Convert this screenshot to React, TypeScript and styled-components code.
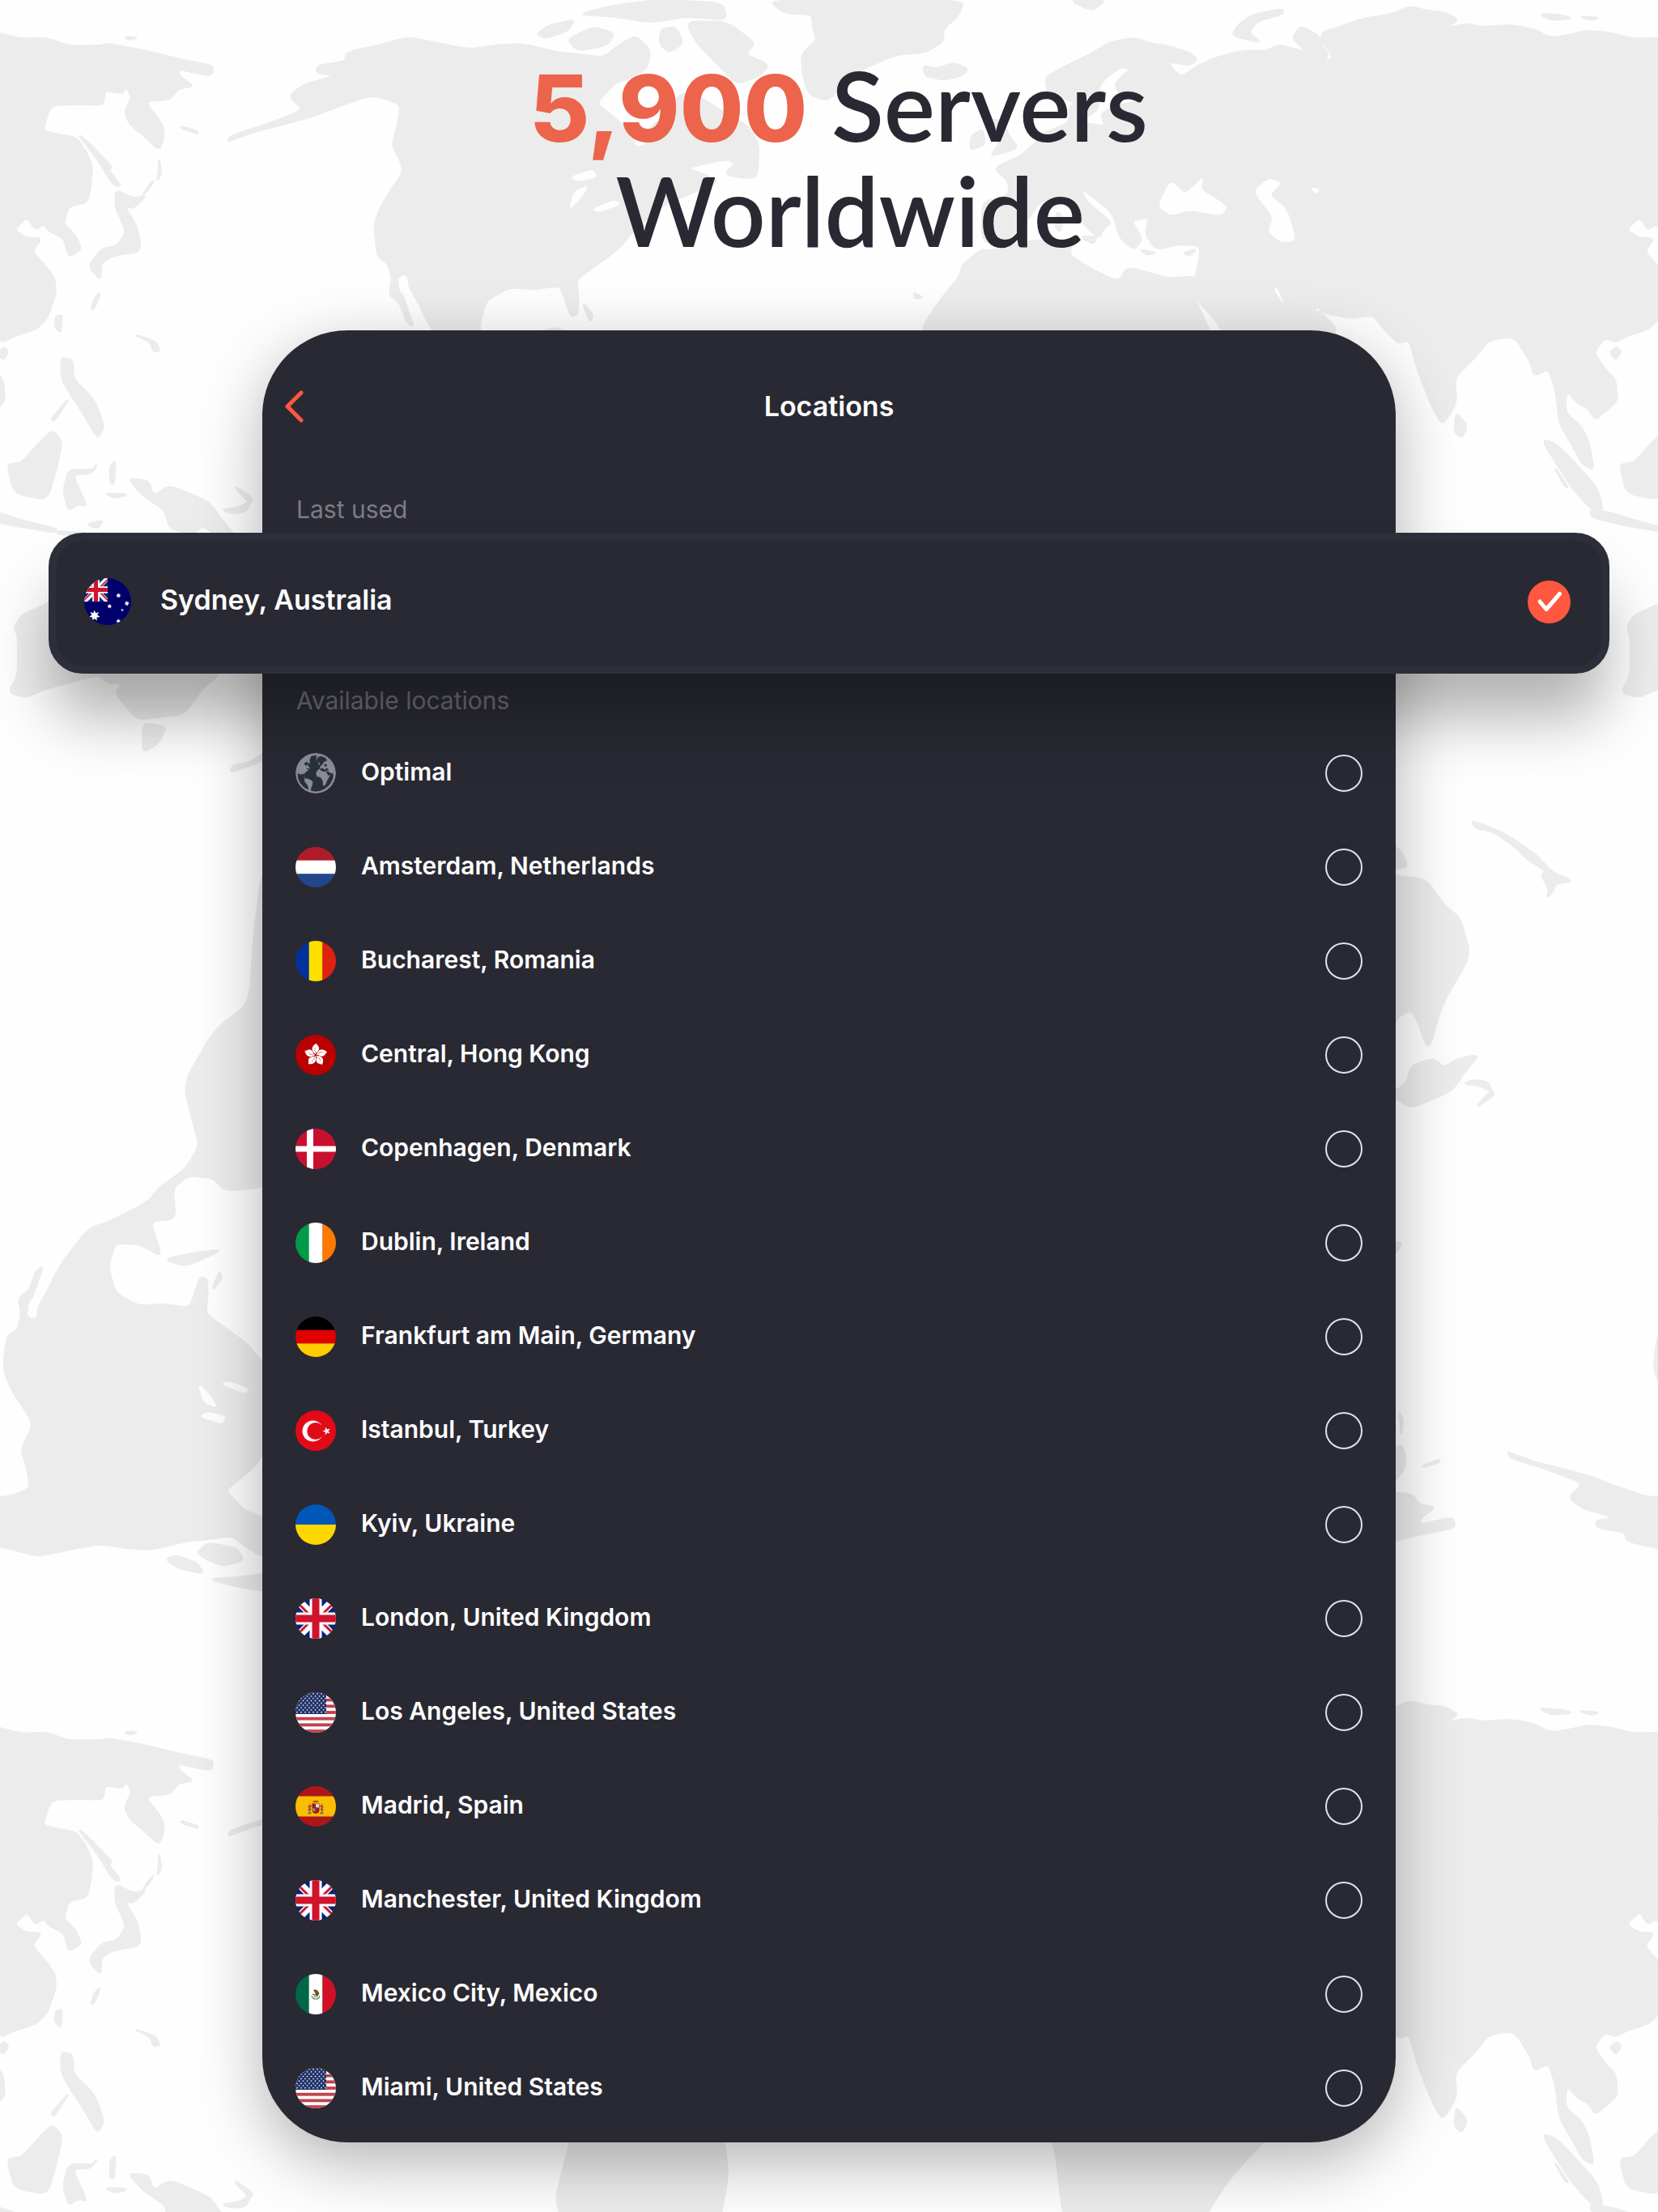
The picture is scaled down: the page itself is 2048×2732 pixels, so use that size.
import React from 'react';
import styled, { createGlobalStyle } from 'styled-components';

const GlobalStyle = createGlobalStyle`
  *, *::before, *::after { box-sizing: border-box; }
  body { margin: 0; background: #fefefe; font-family: Inter, "Liberation Sans", sans-serif; }
`;

const colors = {
  ink: '#292933',
  rim: '#2c2e3a',
  coral: '#ec644b',
  accent: '#ff5740',
  muted: '#7c7c86',
  land: '#ececec',
  sea: '#fefefe',
};

const Page = styled.main`
  --bleed: min(264px, 13vw);
  position: relative;
  overflow: hidden;
  display: flex;
  flex-direction: column;
  gap: 84px;
  padding: 64px 60px 86px;
`;

const Backdrop = styled.svg`
  position: absolute;
  inset: 0;
  width: 100%;
  height: 100%;
`;

const Headline = styled.h1`
  position: relative;
  margin: 0;
  padding-left: 24px;
  text-align: center;
  font-family: Lato, Inter, sans-serif;
  font-size: 119px;
  line-height: 130px;
  font-weight: 600;
  color: ${colors.ink};
`;

const Count = styled.strong`
  font-family: Inter, sans-serif;
  font-size: 114px;
  line-height: 1;
  font-weight: 800;
  color: ${colors.coral};
`;

const Panel = styled.section`
  position: relative;
  margin: 0 var(--bleed);
  padding-bottom: 9px;
  border-radius: 105px;
  background: ${colors.ink};
  color: #fff;
  box-shadow: 0 24px 80px rgba(0, 0, 0, 0.3);
`;

const Header = styled.header`
  display: grid;
  grid-template-columns: 80px 1fr 80px;
  align-items: center;
  padding: 74px 0;
`;

const BackButton = styled.button`
  display: flex;
  height: 40px;
  padding: 0 0 0 26px;
  border: 0;
  background: none;
  cursor: pointer;
`;

const Title = styled.h2`
  margin: 0;
  text-align: center;
  font-size: 34px;
  line-height: 40px;
  font-weight: 600;
`;

const GroupLabel = styled.h3<{ $dim?: boolean }>`
  margin: 0;
  padding: 4px 42px 0;
  font-size: 30px;
  line-height: 58px;
  font-weight: 400;
  color: ${(p) => (p.$dim ? '#6b6b72' : colors.muted)};
`;

const Featured = styled.label`
  position: relative;
  display: flex;
  align-items: center;
  gap: 36px;
  height: 174px;
  margin: 0 calc(-1 * var(--bleed));
  padding: 0 38px 4px 34px;
  border: 10px solid ${colors.rim};
  border-radius: 42px;
  background: ${colors.ink};
  box-shadow: 0 60px 76px -6px rgba(0, 0, 0, 0.3);
  cursor: pointer;
`;

const List = styled.ul`
  margin: 0;
  padding: 3px 41px 0;
  list-style: none;
`;

const Row = styled.label`
  display: flex;
  align-items: center;
  gap: 31px;
  height: 116px;
  cursor: pointer;
`;

const Name = styled.span<{ $large?: boolean }>`
  flex: 1;
  padding-bottom: 4px;
  font-size: ${(p) => (p.$large ? 34 : 30)}px;
  line-height: 40px;
  font-weight: 600;
`;

const Mark = styled.span`
  display: grid;
  place-items: center;
  & > * { grid-area: 1 / 1; }
`;

const Radio = styled.input`
  appearance: none;
  width: 46px;
  height: 46px;
  margin: 0;
  border: 2px solid #e2e2ec;
  border-radius: 50%;
  cursor: pointer;
  &:checked {
    width: 53px;
    height: 53px;
    border: 0;
    background: ${colors.accent};
  }
`;

const Tick = styled.svg`
  pointer-events: none;
`;

const FlagFrame = styled.svg`
  flex: none;
  border-radius: 50%;
`;

/* ---- Flags, each on a 50 x 50 field ---- */

const Rows3 = ({ c }: { c: string[] }) => (
  <>{c.map((f, i) => <rect key={i} y={(i * 50) / c.length} width="50" height={50 / c.length + 0.3} fill={f} />)}</>
);
const Cols3 = ({ c }: { c: string[] }) => (
  <>{c.map((f, i) => <rect key={i} x={(i * 50) / c.length} width={50 / c.length + 0.3} height="50" fill={f} />)}</>
);

const starPoints = (cx: number, cy: number, r: number, n = 5, inner = 0.4, turn = 0) =>
  Array.from({ length: n * 2 }, (_, i) => {
    const a = (Math.PI * i) / n - Math.PI / 2 + turn;
    const q = i % 2 ? r * inner : r;
    return `${(cx + q * Math.cos(a)).toFixed(2)},${(cy + q * Math.sin(a)).toFixed(2)}`;
  }).join(' ');

const UnionJack = () => (
  <>
    <rect width="50" height="50" fill="#00247d" />
    <path d="M0 0L50 50M50 0L0 50" stroke="#fff" strokeWidth="10" />
    <path d="M-1 2L24 27M51 48L26 23M52 1L27 26M-2 49L23 24" stroke="#cf142b" strokeWidth="3" />
    <path d="M25 0V50M0 25H50" stroke="#fff" strokeWidth="15" />
    <path d="M25 0V50M0 25H50" stroke="#cf142b" strokeWidth="9" />
  </>
);

const Australia = () => (
  <>
    <rect width="50" height="50" fill="#00006b" />
    <svg x="0" width="25" height="25" viewBox="0 0 50 50" preserveAspectRatio="none"><UnionJack /></svg>
    <g fill="#fff">
      <polygon points={starPoints(11, 40, 6, 7, 0.5)} />
      <polygon points={starPoints(36.5, 18.5, 2.8, 7, 0.5)} />
      <polygon points={starPoints(45.5, 27, 2.8, 7, 0.5)} />
      <polygon points={starPoints(27, 30, 2.6, 7, 0.5)} />
      <polygon points={starPoints(40.5, 34, 1.7)} />
      <polygon points={starPoints(36.5, 46, 2.8, 7, 0.5)} />
    </g>
  </>
);

const UnitedStates = () => (
  <>
    <rect width="50" height="50" fill="#fff" />
    {Array.from({ length: 7 }, (_, i) => (
      <rect key={i} y={(i * 100) / 13} width="50" height={50 / 13} fill="#c1424e" />
    ))}
    <rect width="38" height="27" fill="#1f3368" />
    {Array.from({ length: 9 }, (_, r) =>
      Array.from({ length: r % 2 ? 7 : 8 }, (_, c) => (
        <polygon key={`${r}-${c}`} fill="#fff" points={starPoints(2 + c * 5 + (r % 2) * 2.5, 2 + r * 2.85, 1.35)} />
      )),
    )}
  </>
);

const HongKong = () => (
  <>
    <rect width="50" height="50" fill="#ba0000" />
    {[0, 72, 144, 216, 288].map((a) => (
      <g key={a} transform={`rotate(${a} 25 25)`}>
        <path d="M25 24C20 21 18 14.500 26 10.500C26 13 30 14 29 18C28 21 25.500 21 25 24Z" fill="#fff" />
        <path d="M25 22C23.500 20 23.500 18 24.500 16" fill="none" stroke="#ba0000" strokeWidth="0.5" />
      </g>
    ))}
  </>
);

const Turkey = () => (
  <>
    <rect width="50" height="50" fill="#e30a17" />
    <circle cx="21.500" cy="25.500" r="13" fill="#fff" />
    <circle cx="24.800" cy="25.500" r="10.500" fill="#e30a17" />
    <polygon points={starPoints(38.5, 25.5, 5.2, 5, 0.38, -Math.PI / 2)} fill="#fff" />
  </>
);

const Denmark = () => (
  <>
    <rect width="50" height="50" fill="#c8102e" />
    <path d="M18 0V50" stroke="#fff" strokeWidth="8" />
    <path d="M0 25H50" stroke="#fff" strokeWidth="7" />
  </>
);

const Spain = () => (
  <>
    <rect width="50" height="50" fill="#ad1519" />
    <rect y="12.500" width="50" height="25" fill="#fabd00" />
    <path d="M20.500 21.500H29.500V29.500Q29.500 33.500 25 34Q20.500 33.500 20.500 29.500Z" fill="#ad1519" />
    <rect x="25" y="22" width="4" height="4.500" fill="#e6d5dc" />
    <rect x="21" y="27" width="4" height="4" fill="#c8742d" />
    <circle cx="25" cy="27.500" r="1.700" fill="#005bbf" />
    <path d="M20.500 20Q25 15 29.500 20Z" fill="#9c5a12" />
    <path d="M17.500 22V33M32.500 22V33" stroke="#8d6b5e" strokeWidth="1.800" />
    <path d="M15.500 33.500H19.500M30.500 33.500H34.500" stroke="#47639b" strokeWidth="1.300" />
    <path d="M15.500 26L20 24.500M34.500 26L30 24.500M15.500 29.500L19 28M34.500 29.500L31 28" stroke="#ad1519" strokeWidth="1.200" />
  </>
);

const Mexico = () => (
  <>
    <Cols3 c={['#006847', '#ffffff', '#ce1126']} />
    <path d="M22 20Q26 18 28.500 22Q30 25 27 27.500Q25 26 24 23Z" fill="#7a4a24" />
    <path d="M21 25L25 26L29 24" fill="none" stroke="#59482c" strokeWidth="1.200" />
    <path d="M20 27Q21 31 25 31Q29 31 30 27" fill="none" stroke="#5d8c5a" strokeWidth="1.200" />
    <path d="M22.500 28H27.500" stroke="#8fa07b" strokeWidth="1.400" />
  </>
);

const Globe = () => (
  <svg viewBox="47 43 150 150" width="50" height="50">
    <circle cx="122" cy="118" r="74" fill="#8c8c97" />
    <g fill="#28303a" stroke="#28303a" strokeWidth="1.500" strokeLinejoin="round">
      <path d="M100 70L106 55L125 53L121 76L130 60L140 55L158 62L163 71L152 75L146 86L139 90L136 101L127 108L122 119L126 131L139 134L147 145L148 161L153 167L160 158L165 145L173 131L181 121L187 120L185 138L174 159L157 174L138 183L119 186L104 182L106 172L110 162L112 151L105 143L92 137L83 137L78 127L82 117L94 108L101 98L94 91L96 83L86 90L79 82L90 76L96 83L102 80Z" />
      <path d="M56 118L66 124L76 130L80 137L79 147L86 156L92 165L95 179L78 171L63 154L57 138Z" />
      <path d="M137 103L148 99L155 106L162 100L170 104L160 110L151 111L143 108Z" />
      <path d="M153 88L160 84L163 90L157 93Z" />
      <path d="M161 112L168 125L174 126L183 119L176 118L168 112Z" />
    </g>
    <path d="M66 122L76 120L86 127L74 131Z" fill="#28303a" />
    <path d="M132 76L139 82L133 88Z" fill="#8c8c97" />
    <path d="M88 98L97 101L92 107Z" fill="#28303a" />
    <circle cx="122" cy="118" r="71" fill="none" stroke="#8c8c97" strokeWidth="6" />
  </svg>
);

const flags: Record<string, React.ReactNode> = {
  au: <Australia />,
  globe: <Globe />,
  nl: <Rows3 c={['#ae1c28', '#ffffff', '#21468b']} />,
  ro: <Cols3 c={['#00319c', '#ffde00', '#de2110']} />,
  hk: <HongKong />,
  dk: <Denmark />,
  ie: <Cols3 c={['#009a49', '#ffffff', '#ff7900']} />,
  de: <Rows3 c={['#000000', '#e00000', '#ffcc00']} />,
  tr: <Turkey />,
  ua: <Rows3 c={['#0057b8', '#ffd700']} />,
  gb: <UnionJack />,
  us: <UnitedStates />,
  es: <Spain />,
  mx: <Mexico />,
};

const Flag = ({ code, size = 50 }: { code: string; size?: number }) => (
  <FlagFrame width={size} height={size} viewBox="0 0 50 50" aria-hidden="true">
    {flags[code]}
  </FlagFrame>
);

const locations = [
  ['globe', 'Optimal'],
  ['nl', 'Amsterdam, Netherlands'],
  ['ro', 'Bucharest, Romania'],
  ['hk', 'Central, Hong Kong'],
  ['dk', 'Copenhagen, Denmark'],
  ['ie', 'Dublin, Ireland'],
  ['de', 'Frankfurt am Main, Germany'],
  ['tr', 'Istanbul, Turkey'],
  ['ua', 'Kyiv, Ukraine'],
  ['gb', 'London, United Kingdom'],
  ['us', 'Los Angeles, United States'],
  ['es', 'Madrid, Spain'],
  ['gb', 'Manchester, United Kingdom'],
  ['mx', 'Mexico City, Mexico'],
  ['us', 'Miami, United States'],
];

/* ---- World map. One world is 4462 units wide and tiles sideways. ---- */

const eastLand = [
  // Europe and Asia
  '2893,215 2935,190 3018,150 3070,118 3136,105 3190,122 3220,125 3290,145 3313,165 3290,180 3230,170 3250,198 3272,212 3310,185 3340,172 3350,165 3400,150 3450,140 3500,142 3540,125 3580,135 3620,147 3575,105 3600,72 3650,100 3660,130 3675,150 3662,175 3688,160 3675,135 3655,110 3660,90 3720,70 3780,50 3850,40 3900,18 3950,30 4000,35 4035,55 4000,78 4060,66 4100,75 4180,70 4240,80 4290,105 4340,98 4390,85 4460,92 4520,108 4592,105 4652,128 4740,126 4762,122 4862,140 4962,165 5052,182 5047,210 4952,190 4960,212 4997,238 4955,245 4932,275 4862,280 4912,345 4915,380 4902,415 4860,375 4822,345 4807,310 4827,270 4812,240 4800,258 4752,250 4747,290 4690,288 4602,290 4580,360 4610,370 4672,380 4700,420 4717,460 4712,520 4702,560 4652,570 4637,620 4670,650 4687,690 4652,710 4640,660 4600,640 4582,620 4560,635 4537,600 4500,635 4532,658 4577,660 4550,695 4590,740 4612,770 4617,810 4592,880 4562,910 4500,930 4472,945 4440,935 4410,975 4440,1020 4470,1050 4475,1110 4440,1140 4415,1160 4395,1130 4365,1115 4335,1080 4330,1140 4375,1180 4395,1220 4410,1300 4380,1285 4350,1230 4315,1170 4305,1080 4285,1020 4245,1040 4235,1000 4190,930 4120,940 4080,990 4025,1045 4030,1110 4010,1150 3990,1172 3965,1130 3925,1030 3900,940 3870,950 3830,910 3800,872 3740,880 3660,865 3645,845 3620,885 3580,885 3560,850 3535,790 3520,800 3560,860 3580,885 3620,890 3645,855 3705,915 3620,1010 3400,1090 3385,912 3310,825 3290,800 3310,765 3325,680 3260,675 3200,690 3170,650 3180,600 3130,610 3160,660 3140,690 3100,660 3080,590 3020,540 2988,520 3008,560 3075,615 3055,630 3040,660 2990,610 2950,560 2878,555 2850,600 2808,640 2780,675 2748,680 2718,660 2718,560 2793,540 2790,500 2750,465 2828,430 2870,390 2898,365 2960,340 2960,290 2995,300 2990,340 3060,350 3045,315 3100,290 3185,275 3100,265 3085,230 3130,190 3100,185 3060,215 3040,240 3040,300 3000,330 2970,280 2900,260',
  // Africa
  '2718,690 2738,695 2858,665 2968,665 2958,705 3020,745 3095,780 3120,740 3180,755 3230,770 3310,765 3295,800 3345,912 3430,1110 3570,1100 3530,1200 3400,1340 3330,1450 3250,1600 3130,1760 3050,1750 2990,1600 2940,1434 2920,1250 2880,1170 2800,1140 2620,1130 2540,1010 2553,912 2568,880 2610,820 2653,770 2665,730',
  // Iceland, Britain and Ireland
  '2555,182 2590,190 2640,175 2678,190 2660,210 2610,220 2560,210',
  '2740,330 2775,335 2790,375 2818,410 2740,432 2765,400 2750,375',
  '2688,375 2720,358 2725,400 2685,415',
  // Mediterranean islands
  '3155,690 3200,700 3170,704',
  '3275,700 3310,690 3290,708',
  '2990,655 3035,655 3025,675',
  '2925,585 2940,600 2935,640 2920,630',
  // Canary Islands
  '2530,810 2555,825 2530,825',
  // Russian Arctic islands
  '3550,25 3470,40 3430,65 3408,98 3490,118 3455,92 3475,60 3550,38',
  '4260,38 4320,42 4350,50 4290,55',
  '4370,45 4425,50 4400,55',
  '2960,0 3020,30 3060,0',
  '345,103 380,103 360,110',
  // Japan and Sakhalin
  '320,525 370,550 405,540 370,575 345,572 380,630 390,695 320,705 280,725 278,775 245,735 280,690 325,680 350,640 320,575',
  '215,370 250,400 310,462 300,470 335,515 312,510 270,440',
  '440,440 446,480 435,500 440,470',
  '425,500 410,525 395,540 415,510',
  '500,350 545,362 548,370 505,356',
  '262,825 278,810 262,850 252,858',
  '370,925 430,945 442,970 425,972 415,945',
  // Southeast Asia
  '155,875 172,872 168,920 152,905',
  '170,990 200,995 203,1050 260,1105 288,1180 270,1212 240,1160 170,1050',
  '190,1105 150,1165 142,1160 175,1120',
  '20,1285 60,1280 100,1235 145,1190 172,1222 155,1300 130,1382 40,1365',
  '190,1300 260,1300 268,1285 250,1310 200,1312 240,1400 215,1395 190,1412 175,1360',
  '-60,1410 0,1420 60,1440 160,1465 150,1472 40,1455 -60,1430',
  '160,1470 240,1475 230,1480 160,1478',
  '240,1450 285,1440 270,1462',
  '290,1365 355,1368 320,1378',
  '305,1290 320,1275 315,1340 305,1335',
  '355,1325 410,1330 425,1372 470,1343 580,1390 615,1440 656,1490 600,1480 560,1455 530,1480 470,1460 455,1410 400,1375',
  '615,1410 660,1405 695,1385 680,1415 640,1420',
  '650,1345 700,1380 692,1392 660,1360',
  '4265,1215 4310,1230 4420,1350 4435,1412 4410,1415 4350,1350',
  '4300,1290 4340,1350 4330,1345',
  '4030,1140 4060,1180 4045,1210 4025,1195',
  '4455,975 4475,960 4485,975 4470,995',
  // Australia, Tasmania and New Zealand
  '60,1702 135,1669 180,1640 240,1570 300,1600 340,1540 400,1530 430,1594 469,1615 488,1581 517,1502 555,1633 633,1764 605,1867 560,1904 510,1975 430,1985 380,1990 320,1919 340,1890 300,1890 270,1867 190,1889 130,1904 70,1930 25,1915 50,1867 50,1762 40,1735',
  '395,2001 460,2010 440,2055 395,2082',
  '637,2137 645,2118 690,2110 745,2075 800,2024 825,2015 828,2032 760,2082 700,2115',
  '800,2026 840,2000 830,1985 850,1950 845,1925 862,1945 870,1965 915,1970 860,1995 825,2032',
];

const westLand = [
  // North, Central and South America
  '960,145 1050,125 1130,103 1220,122 1300,137 1380,125 1450,122 1540,145 1600,150 1668,160 1720,120 1760,100 1800,140 1790,190 1730,220 1700,230 1650,285 1680,310 1740,360 1760,410 1790,400 1800,350 1850,320 1880,260 1930,265 1985,300 2020,320 2070,350 2100,400 2095,490 2050,470 2020,440 1960,450 1900,465 1940,480 1990,500 1900,540 1830,570 1750,640 1710,690 1640,740 1595,775 1600,820 1598,870 1580,875 1565,830 1550,790 1480,800 1410,795 1345,830 1325,905 1345,970 1414,966 1474,932 1440,1030 1511,1036 1504,1123 1548,1157 1616,1149 1646,1115 1750,1123 1850,1175 1960,1220 2005,1239 2015,1330 1995,1434 1980,1600 1920,1750 1850,2100 1752,2000 1728,1817 1717,1633 1620,1560 1534,1411 1563,1293 1578,1241 1541,1175 1467,1123 1437,1084 1325,1026 1272,1010 1195,912 1120,770 1095,765 1115,820 1145,905 1125,890 1108,840 1078,815 1085,770 1075,730 1045,710 1035,620 1060,560 1120,470 1085,400 1100,350 1110,290 1060,270 1020,265 920,300 870,320 780,345 700,365 630,392 640,375 750,340 840,305 800,265 840,235 930,210 875,200 880,182 955,170',
  // Greenland
  '2128,0 2168,35 2248,40 2250,80 2262,110 2218,150 2222,210 2240,262 2290,278 2328,240 2368,200 2478,150 2560,145 2610,115 2610,80 2650,45 2668,0',
  // Newfoundland and Cuba
  '2005,480 2050,440 2070,470 2095,490 2050,492',
  '1480,925 1540,905 1640,950 1580,945',
  '1615,840 1640,870 1635,890 1620,860',
  // Canadian Arctic islands
  '1898,60 2010,60 2090,120 2060,150 2128,180 2100,210 2038,232 1998,190 1960,150 1930,120',
  '1600,40 1700,15 1820,0 2000,8 2010,55 1900,45 1800,62 1700,45',
  '1570,110 1640,75 1700,92 1680,125 1600,140',
  '1830,80 1870,75 1890,120 1850,145 1825,120',
  '1485,95 1520,70 1590,55 1570,85 1510,105',
];

const water = [
  '3205,570 3240,500 3280,540 3330,490 3320,525 3395,570 3380,595 3290,580 3240,595',
  '3470,530 3510,495 3545,505 3510,540 3560,580 3585,665 3545,668 3510,640 3525,600',
  '3630,520 3650,525 3640,535',
  '1580,490 1640,470 1650,490 1600,500',
  '1575,580 1590,530 1625,515 1612,540',
  '1640,580 1700,555 1715,565 1660,585',
  '1108,765 1125,765 1128,795 1160,850 1185,912 1160,890 1130,830 1105,800',
];

/* Turns a coastline into a closed path with its corners rounded off. */
const coast = (points: string) => {
  const p = points.split(' ').map((s) => s.split(',').map(Number));
  const at = (a: number[], b: number[], t: number) =>
    `${(a[0] + (b[0] - a[0]) * t).toFixed(1)} ${(a[1] + (b[1] - a[1]) * t).toFixed(1)}`;
  return (
    p
      .map((v, i) => {
        const prev = p[(i + p.length - 1) % p.length];
        const next = p[(i + 1) % p.length];
        return `${i ? 'L' : 'M'}${at(v, prev, 0.3)}Q${v[0]} ${v[1]} ${at(v, next, 0.3)}`;
      })
      .join('') + 'Z'
  );
};

const WorldMap = () => (
  <Backdrop viewBox="0 0 2048 2732" preserveAspectRatio="xMidYMin slice" aria-hidden="true">
    <defs>
      <g id="east" fill={colors.land} stroke={colors.land} strokeWidth="6" strokeLinejoin="round">
        {eastLand.map((p, i) => <path key={i} d={coast(p)} />)}
      </g>
      <g id="west" fill={colors.land} stroke={colors.land} strokeWidth="6" strokeLinejoin="round">
        {westLand.map((p, i) => <path key={i} d={coast(p)} />)}
      </g>
      <g id="lakes" fill={colors.sea} stroke={colors.sea} strokeWidth="4" strokeLinejoin="round">
        {water.map((p, i) => <path key={i} d={coast(p)} />)}
      </g>
      <g id="band">
        <use href="#east" x="-4462" />
        <use href="#east" />
        <use href="#west" />
        <use href="#lakes" />
        <use href="#east" x="4462" />
      </g>
    </defs>
    <use href="#band" transform="scale(0.4464)" />
    <g transform="translate(-458 1968) scale(0.4464 -0.4464)">
      <use href="#band" />
      <use href="#west" x="4567" />
    </g>
    <use href="#band" transform="translate(0 2093) scale(0.4464)" />
  </Backdrop>
);

export default function App() {
  return (
    <>
      <GlobalStyle />
      <Page>
        <WorldMap />
        <Headline>
          <Count>5,900</Count> Servers
          <br />
          {'\u00a0'}Worldwide
        </Headline>
        <Panel>
          <Header>
            <BackButton type="button" aria-label="Back">
              <svg width="28" height="40" viewBox="0 0 28 40" fill="none" stroke={colors.accent} strokeWidth="5" strokeLinecap="round" strokeLinejoin="round">
                <path d="M22 3L5 20L22 37" />
              </svg>
            </BackButton>
            <Title>Locations</Title>
          </Header>
          <GroupLabel>Last used</GroupLabel>
          <Featured>
            <Flag code="au" size={58} />
            <Name $large>Sydney, Australia</Name>
            <Mark>
              <Radio type="radio" name="location" defaultChecked />
              <Tick width="52" height="52" viewBox="0 0 52 52" fill="none" stroke="#fff" strokeWidth="5" strokeLinecap="round" strokeLinejoin="round" aria-hidden="true">
                <path d="M14 26L22 35.500L38.500 16.500" />
              </Tick>
            </Mark>
          </Featured>
          <GroupLabel $dim>Available locations</GroupLabel>
          <List>
            {locations.map(([code, name]) => (
              <li key={name}>
                <Row>
                  <Flag code={code} />
                  <Name>{name}</Name>
                  <Radio type="radio" name="location" />
                </Row>
              </li>
            ))}
          </List>
        </Panel>
      </Page>
    </>
  );
}
